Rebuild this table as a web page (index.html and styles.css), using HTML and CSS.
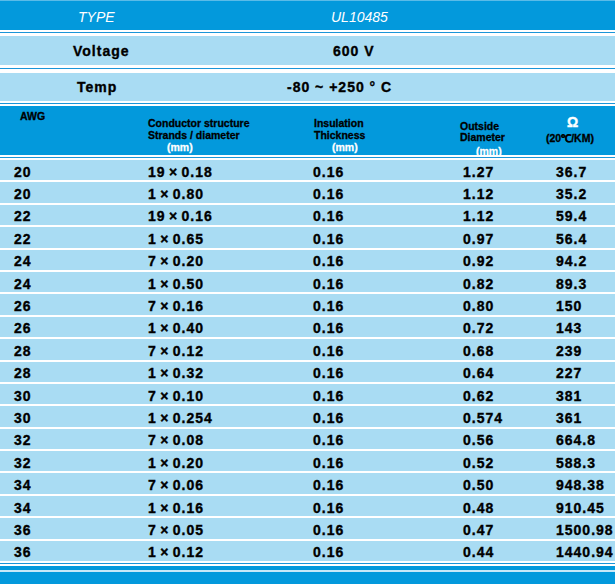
FILE: index.html
```html
<!DOCTYPE html>
<html>
<head>
<meta charset="utf-8">
<link rel="stylesheet" href="styles.css">
</head>
<body>
<div class="sheet">
  <div class="topline"></div>
  <div class="typebar">
    <span class="type-label">TYPE</span>
    <span class="type-value">UL10485</span>
  </div>
  <div class="sep sep-a"></div>
  <div class="band band-volt">
    <span class="band-label">Voltage</span>
    <span class="band-value">600 V</span>
  </div>
  <div class="sep sep-b"></div>
  <div class="band band-temp">
    <span class="band-label temp-label">Temp</span>
    <span class="band-value temp-value">-80 ~ +250 ° C</span>
  </div>
  <div class="sep sep-c"></div>
  <div class="head">
    <div class="h-awg">AWG</div>
    <div class="h-cond">
      <div>Conductor structure</div>
      <div>Strands / diameter</div>
      <div class="mm mm-cond">(mm)</div>
    </div>
    <div class="h-ins">
      <div>Insulation</div>
      <div>Thickness</div>
      <div class="mm mm-ins">(mm)</div>
    </div>
    <div class="h-od">
      <div>Outside</div>
      <div>Diameter</div>
      <div class="mm mm-od">(mm)</div>
    </div>
    <div class="h-ohm">
      <div class="ohm">Ω</div>
      <div class="ohm-unit">(20℃/KM)</div>
    </div>
  </div>
  <div class="sep sep-d"></div>
  <div class="rows">
    <div class="row"><span>20</span><span class="cond">19 × 0.18</span><span>0.16</span><span>1.27</span><span>36.7</span></div>
    <div class="row"><span>20</span><span class="cond">1 × 0.80</span><span>0.16</span><span>1.12</span><span>35.2</span></div>
    <div class="row"><span>22</span><span class="cond">19 × 0.16</span><span>0.16</span><span>1.12</span><span>59.4</span></div>
    <div class="row"><span>22</span><span class="cond">1 × 0.65</span><span>0.16</span><span>0.97</span><span>56.4</span></div>
    <div class="row"><span>24</span><span class="cond">7 × 0.20</span><span>0.16</span><span>0.92</span><span>94.2</span></div>
    <div class="row"><span>24</span><span class="cond">1 × 0.50</span><span>0.16</span><span>0.82</span><span>89.3</span></div>
    <div class="row"><span>26</span><span class="cond">7 × 0.16</span><span>0.16</span><span>0.80</span><span>150</span></div>
    <div class="row"><span>26</span><span class="cond">1 × 0.40</span><span>0.16</span><span>0.72</span><span>143</span></div>
    <div class="row"><span>28</span><span class="cond">7 × 0.12</span><span>0.16</span><span>0.68</span><span>239</span></div>
    <div class="row"><span>28</span><span class="cond">1 × 0.32</span><span>0.16</span><span>0.64</span><span>227</span></div>
    <div class="row"><span>30</span><span class="cond">7 × 0.10</span><span>0.16</span><span>0.62</span><span>381</span></div>
    <div class="row"><span>30</span><span class="cond">1 × 0.254</span><span>0.16</span><span>0.574</span><span>361</span></div>
    <div class="row"><span>32</span><span class="cond">7 × 0.08</span><span>0.16</span><span>0.56</span><span>664.8</span></div>
    <div class="row"><span>32</span><span class="cond">1 × 0.20</span><span>0.16</span><span>0.52</span><span>588.3</span></div>
    <div class="row"><span>34</span><span class="cond">7 × 0.06</span><span>0.16</span><span>0.50</span><span>948.38</span></div>
    <div class="row"><span>34</span><span class="cond">1 × 0.16</span><span>0.16</span><span>0.48</span><span>910.45</span></div>
    <div class="row"><span>36</span><span class="cond">7 × 0.05</span><span>0.16</span><span>0.47</span><span>1500.98</span></div>
    <div class="row"><span>36</span><span class="cond">1 × 0.12</span><span>0.16</span><span>0.44</span><span>1440.94</span></div>
  </div>
  <div class="sep sep-e"></div>
  <div class="foot-a"></div>
  <div class="foot-b"></div>
</div>
</body>
</html>
```

FILE: styles.css
```css
html, body {
  margin: 0;
  padding: 0;
  background: #ffffff;
}

.sheet {
  width: 615px;
  height: 584px;
  overflow: hidden;
  display: flex;
  flex-direction: column;
  font-family: "Liberation Sans", Arial, sans-serif;
  color: #000;
}

.topline {
  height: 1px;
  background: #5bbbe8;
}

.typebar {
  height: 29px;
  background: #0399dc;
  display: flex;
  align-items: center;
  color: #fff;
  font-style: italic;
  font-size: 14px;
  padding-top: 2px;
  box-sizing: border-box;
}

.type-label {
  margin-left: 78px;
  width: 253px;
}

.sep {
  background: #1a95d8;
  height: 1px;
  border-top: 2px solid #fff;
  border-bottom: 3px solid #fff;
}

.sep-b {
  border-top-width: 3px;
  border-bottom-width: 4px;
}

.sep-c,
.sep-d,
.sep-e {
  border-bottom-width: 2px;
}

.band {
  background: #a9dcf3;
  display: flex;
  align-items: center;
  font-weight: bold;
  font-size: 14px;
  letter-spacing: 1px;
  -webkit-text-stroke: 0.35px #000;
}

.band-volt {
  height: 29px;
}

.band-temp {
  height: 28px;
}

.band-label {
  margin-left: 73px;
  width: 260px;
}

.temp-label {
  margin-left: 77px;
  width: 210px;
}

.head {
  height: 49px;
  background: #0399dc;
  display: grid;
  grid-template-columns: 148px 166px 146px 86px 1fr;
  font-weight: bold;
  font-size: 10.5px;
  line-height: 12px;
  -webkit-text-stroke: 0.3px #000;
}

.h-awg {
  padding-left: 20px;
  padding-top: 4px;
}

.h-cond,
.h-ins {
  padding-top: 11px;
}

.mm {
  color: #fff;
  -webkit-text-stroke: 0.3px #fff;
}

.mm-cond {
  padding-left: 19px;
}

.mm-ins {
  padding-left: 18px;
}

.h-od {
  padding-top: 15px;
  line-height: 11px;
}

.mm-od {
  padding-left: 16px;
  margin-top: 2px;
  line-height: 12px;
}

.h-ohm {
  padding-top: 9px;
}

.ohm {
  color: #fff;
  -webkit-text-stroke: 0.4px #fff;
  font-size: 14px;
  line-height: 14px;
  padding-left: 21px;
}

.ohm-unit {
  margin-top: 3px;
}

.rows {
  display: flex;
  flex-direction: column;
  gap: 2px;
  background: #fff;
}

.row {
  height: 20.4px;
  background: #a9dcf3;
  display: grid;
  grid-template-columns: 148px 165px 150px 93px 1fr;
  align-items: center;
  box-sizing: border-box;
  padding-top: 3px;
  font-weight: bold;
  font-size: 14px;
  letter-spacing: 1px;
  line-height: 16px;
  white-space: nowrap;
  -webkit-text-stroke: 0.35px #000;
}

.row span:first-child {
  padding-left: 14px;
}

.row .cond {
  word-spacing: -1.5px;
}

.foot-a {
  height: 4px;
  background: #0399dc;
  border-bottom: 2px solid #c8e8f8;
}

.foot-b {
  flex: 1;
  background: #0399dc;
}
```
